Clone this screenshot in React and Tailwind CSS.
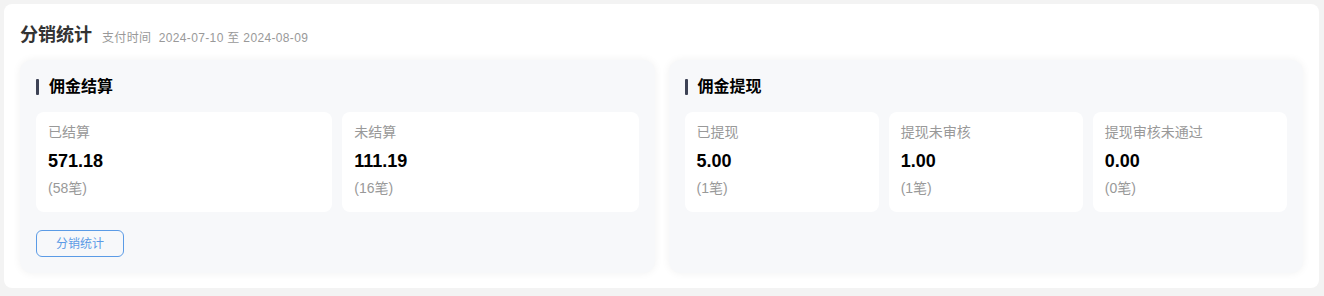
import React from "react";

const font = { fontFamily: '"Liberation Sans", "Noto Sans CJK SC", sans-serif' };

function StatCard({ label, value, count }) {
  return (
    <div className="flex-1 bg-white rounded-[8px] h-[100px] pl-[12px] pt-[10px]">
      <div className="text-[14px] leading-[20px] text-[#999999]">{label}</div>
      <div className="text-[18px] leading-[22px] font-bold text-black mt-[8px]">{value}</div>
      <div className="text-[14px] leading-[20px] text-[#999999] mt-[6px]">{count}</div>
    </div>
  );
}

function Panel({ title, children, footer }) {
  return (
    <div className="flex-1 bg-[#f7f8fa] rounded-[12px] shadow-[0_0_8px_rgba(0,0,0,0.06)] px-[16px] pt-[17px] pb-[16px]">
      <div className="flex items-center h-[20px]">
        <div className="w-[3px] h-[16px] bg-[#3d4255] rounded-[1px]" />
        <div className="ml-[10px] text-[16px] leading-[20px] font-bold text-black">{title}</div>
      </div>
      <div className="flex gap-[10px] mt-[15px]">{children}</div>
      {footer}
    </div>
  );
}

export default function App() {
  return (
    <div className="w-[1324px] h-[296px] bg-[#f3f3f3] p-[4px] pr-[5px] pb-[8px]" style={font}>
      <div className="bg-white rounded-[8px] h-full px-[16px] pt-[18px] pb-[16px] flex flex-col">
        <div className="flex items-end h-[26px]">
          <div className="text-[18px] leading-[26px] font-bold text-[#333333]">分销统计</div>
          <div className="ml-[10px] text-[12px] leading-[18px] tracking-[0.35px] text-[#999999] mb-[1px]">支付时间&nbsp;&nbsp;2024-07-10 至 2024-08-09</div>
        </div>
        <div className="flex gap-[14px] mt-[12px] flex-1">
          <Panel
            title="佣金结算"
            footer={
              <button className="mt-[18px] w-[88px] h-[27px] border border-[#5b9be6] rounded-[6px] text-[12px] text-[#5b9be6] bg-transparent flex items-center justify-center">
                分销统计
              </button>
            }
          >
            <StatCard label="已结算" value="571.18" count="(58笔)" />
            <StatCard label="未结算" value="111.19" count="(16笔)" />
          </Panel>
          <Panel title="佣金提现">
            <StatCard label="已提现" value="5.00" count="(1笔)" />
            <StatCard label="提现未审核" value="1.00" count="(1笔)" />
            <StatCard label="提现审核未通过" value="0.00" count="(0笔)" />
          </Panel>
        </div>
      </div>
    </div>
  );
}
